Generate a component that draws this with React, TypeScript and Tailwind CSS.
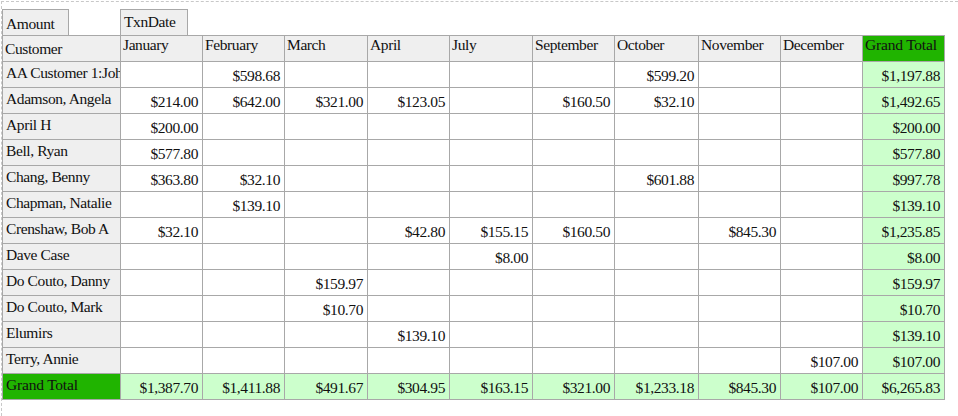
const MONTHS = ['January', 'February', 'March', 'April', 'July', 'September', 'October', 'November', 'December']
const WIDTHS = ['w-[118px]', 'w-[82px]', 'w-[82px]', 'w-[83px]', 'w-[82px]', 'w-[83px]', 'w-[82px]', 'w-[84px]', 'w-[82px]', 'w-[82px]', 'w-[82px]']

// month values in MONTHS order, then the grand total
const ROWS: { name: string; values: string[]; total: string }[] = [
  { name: 'AA Customer 1:John', values: ['', '$598.68', '', '', '', '', '$599.20', '', ''], total: '$1,197.88' },
  { name: 'Adamson, Angela', values: ['$214.00', '$642.00', '$321.00', '$123.05', '', '$160.50', '$32.10', '', ''], total: '$1,492.65' },
  { name: 'April H', values: ['$200.00', '', '', '', '', '', '', '', ''], total: '$200.00' },
  { name: 'Bell, Ryan', values: ['$577.80', '', '', '', '', '', '', '', ''], total: '$577.80' },
  { name: 'Chang, Benny', values: ['$363.80', '$32.10', '', '', '', '', '$601.88', '', ''], total: '$997.78' },
  { name: 'Chapman, Natalie', values: ['', '$139.10', '', '', '', '', '', '', ''], total: '$139.10' },
  { name: 'Crenshaw, Bob A', values: ['$32.10', '', '', '$42.80', '$155.15', '$160.50', '', '$845.30', ''], total: '$1,235.85' },
  { name: 'Dave Case', values: ['', '', '', '', '$8.00', '', '', '', ''], total: '$8.00' },
  { name: 'Do Couto, Danny', values: ['', '', '$159.97', '', '', '', '', '', ''], total: '$159.97' },
  { name: 'Do Couto, Mark', values: ['', '', '$10.70', '', '', '', '', '', ''], total: '$10.70' },
  { name: 'Elumirs', values: ['', '', '', '$139.10', '', '', '', '', ''], total: '$139.10' },
  { name: 'Terry, Annie', values: ['', '', '', '', '', '', '', '', '$107.00'], total: '$107.00' },
]

const GRAND = ['$1,387.70', '$1,411.88', '$491.67', '$304.95', '$163.15', '$321.00', '$1,233.18', '$845.30', '$107.00']

const cell = 'border border-[#a8a8a8] h-[26px] p-0 overflow-hidden whitespace-nowrap'
const num = 'text-right align-top pr-[4px] pt-[5px] tracking-[-0.4px]'

export default function App() {
  return (
    <div className="w-[958px] h-[416px] bg-white text-[15.5px] leading-[17px] text-[#111] overflow-hidden" style={{ fontFamily: '"Liberation Serif", "Times New Roman", serif' }}>
      <div className="ml-[1px] mt-[1px] h-[415px] border-t border-l border-dashed border-[#c8c8c8] pt-[7px]">
        <div className="flex">
          <div className="w-[67px] h-[26px] border border-b-0 border-[#a8a8a8] bg-[#efefef] pl-[3px] pt-[5px] tracking-[-0.4px]">Amount</div>
          <div className="w-[51px]" />
          <div className="w-[68px] h-[26px] border border-b-0 border-[#a8a8a8] bg-[#efefef] pl-[3px] pt-[3px] tracking-[-0.4px]">TxnDate</div>
        </div>
        <table className="table-fixed border-collapse w-[943px]">
          <colgroup>
            {WIDTHS.map((w, i) => <col key={i} className={w} />)}
          </colgroup>
          <thead>
            <tr>
              <th className={`${cell} bg-[#efefef] font-normal text-left align-top pl-[2px] pt-[4px] tracking-[-0.4px]`}>Customer</th>
              {MONTHS.map(m => (
                <th key={m} className={`${cell} bg-[#efefef] font-normal text-left align-top pl-[2px] pt-0 tracking-[-0.4px]`}>{m}</th>
              ))}
              <th className={`${cell} bg-[#20b400] font-normal text-left align-top pl-[2px] pt-0 tracking-[-0.2px]`}>Grand Total</th>
            </tr>
          </thead>
          <tbody>
            {ROWS.map(r => (
              <tr key={r.name}>
                <td className={`${cell} bg-[#efefef] align-top pl-[3px] pt-[2px] tracking-[-0.4px]`}>{r.name}</td>
                {r.values.map((v, i) => (
                  <td key={i} className={`${cell} ${num}`}>{v}</td>
                ))}
                <td className={`${cell} bg-[#ccffcc] ${num}`}>{r.total}</td>
              </tr>
            ))}
            <tr>
              <td className={`${cell} bg-[#20b400] align-top pl-[3px] pt-[2px] tracking-[-0.2px]`}>Grand Total</td>
              {GRAND.map((v, i) => (
                <td key={i} className={`${cell} bg-[#ccffcc] ${num}`}>{v}</td>
              ))}
              <td className={`${cell} bg-[#ccffcc] ${num}`}>$6,265.83</td>
            </tr>
          </tbody>
        </table>
      </div>
    </div>
  )
}
